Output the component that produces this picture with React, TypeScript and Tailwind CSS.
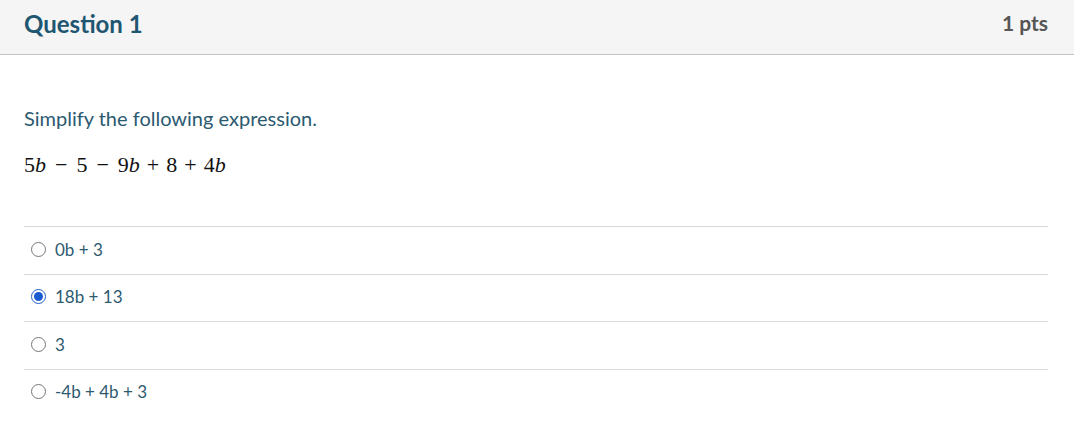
import React from "react";

const opcoes = [
  { id: "a", texto: "0b + 3", marcado: false },
  { id: "b", texto: "18b + 13", marcado: true },
  { id: "c", texto: "3", marcado: false },
  { id: "d", texto: "-4b + 4b + 3", marcado: false },
];

function Radio({ marcado }: { marcado: boolean }) {
  return (
    <span
      className={
        "flex h-[15px] w-[15px] flex-shrink-0 items-center justify-center rounded-full border " +
        (marcado ? "border-[#1f5fc9]" : "border-[#767676]")
      }
    >
      {marcado && <span className="h-[9px] w-[9px] rounded-full bg-[#1a5bd1]" />}
    </span>
  );
}

export default function App() {
  const mi = "italic";
  return (
    <div className="h-[441px] w-[1074px] bg-white" style={{ fontFamily: "Lato, 'Noto Sans', sans-serif" }}>
      {/* cabeçalho */}
      <div className="flex h-[55px] items-start justify-between border-b border-[#c4c4c4] bg-[#f5f5f5] pl-[24px] pr-[26px] pt-[9px]">
        <h2 className="text-[24px] leading-[30px] font-bold text-[#1f5671]">Question 1</h2>
        <span className="text-[21px] leading-[28px] font-bold text-[#565656]">1 pts</span>
      </div>

      <div className="px-[24px] pt-[51px]">
        <p className="text-[20px] leading-[24px] text-[#2b5a70]">Simplify the following expression.</p>
        <div className="mt-[23px] text-[22px] leading-[24px] text-[#111]" style={{ fontFamily: "'Liberation Serif', 'Times New Roman', serif" }}>
          5<span className={mi}>b</span>
          <span className="mx-[9px]">−</span>5<span className="mx-[9px]">−</span>9<span className={mi}>b</span>
          <span className="mx-[7px]">+</span>8<span className="mx-[7px]">+</span>4<span className={mi}>b</span>
        </div>

        <div className="mt-[49px] w-[1024px]">
          {opcoes.map((o) => (
            <label key={o.id} className="flex h-[47.5px] items-center gap-[9px] border-t border-[#d9d9d9] pb-[2px] pl-[7px]">
              <Radio marcado={o.marcado} />
              <span className="text-[17px] text-[#2d5a70]">{o.texto}</span>
            </label>
          ))}
        </div>
      </div>
    </div>
  );
}
